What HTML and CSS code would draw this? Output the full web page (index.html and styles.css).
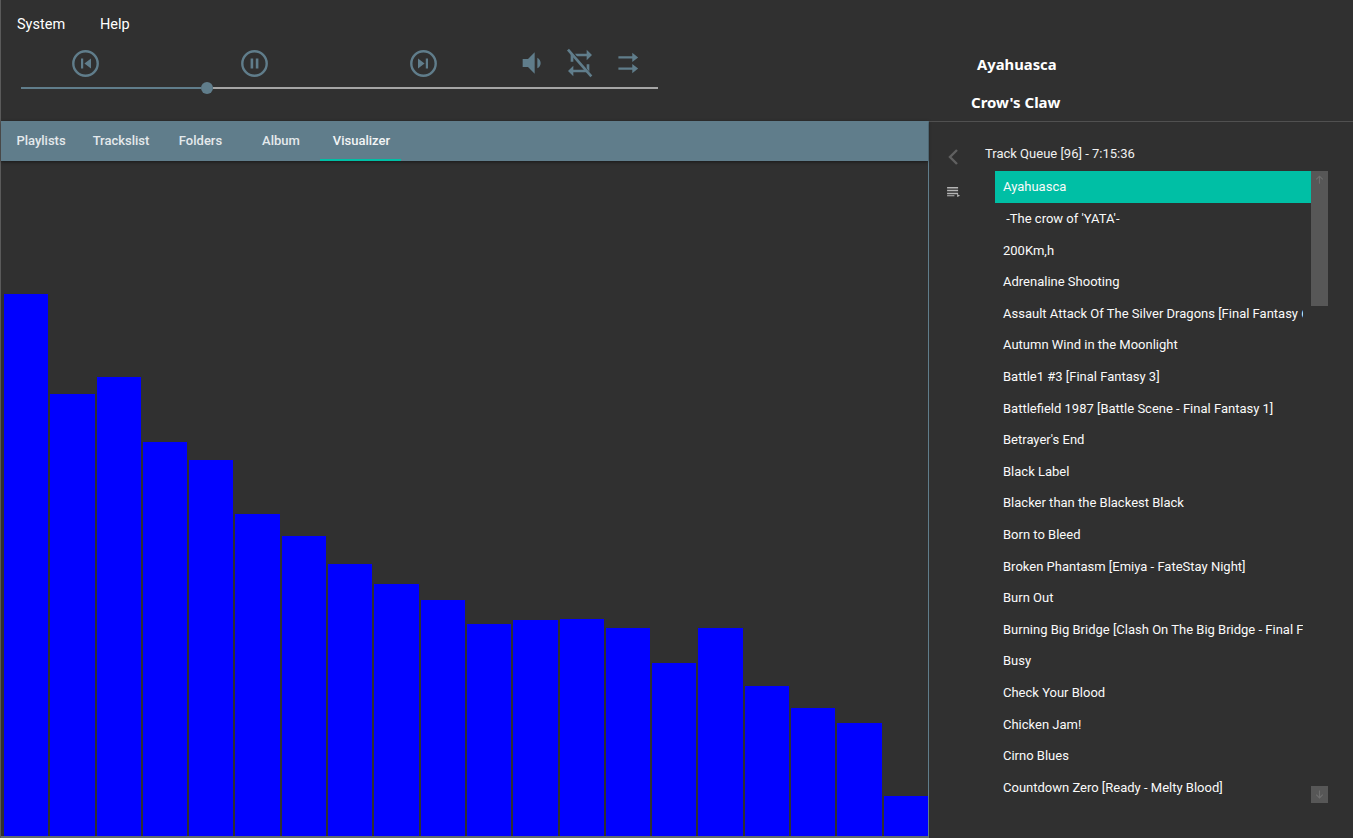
FILE: index.html
```html
<!DOCTYPE html>
<html lang="en">
<head>
    <meta charset="UTF-8">
    <title>Music Player</title>
    <link rel="stylesheet" href="styles.css">
</head>
<body>
    <div class="app">
        <header class="top">
            <div class="top-left">
                <nav class="menu">
                    <span class="menu-item menu-system">System</span>
                    <span class="menu-item">Help</span>
                </nav>
                <div class="controls">
                    <div class="btn-main">
                        <svg class="icon-round" viewBox="0 0 27 27"><circle cx="13.5" cy="13.5" r="12.2"/><path class="solid" d="M9 8.6h2.2v9.8H9zM12.4 13.5l6.6-5v10z"/></svg>
                    </div>
                    <div class="btn-main">
                        <svg class="icon-round" viewBox="0 0 27 27"><circle cx="13.5" cy="13.5" r="12.2"/><path class="solid" d="M9.6 8.6h2.6v9.8H9.6zM14.8 8.6h2.6v9.8h-2.6z"/></svg>
                    </div>
                    <div class="btn-main">
                        <svg class="icon-round" viewBox="0 0 27 27"><circle cx="13.5" cy="13.5" r="12.2"/><path class="solid" d="M8 8.5l6.6 5-6.6 5zM15.8 8.6H18v9.8h-2.2z"/></svg>
                    </div>
                    <div class="btn-small">
                        <svg class="icon" viewBox="0 0 24 24"><path class="solid" d="M18.5 12c0-1.77-1.02-3.29-2.5-4.03v8.05c1.48-.73 2.5-2.25 2.5-4.02zM5 9v6h4l5 5V4L9 9H5z"/></svg>
                    </div>
                    <div class="btn-small">
                        <svg class="icon" viewBox="0 0 24 24"><path class="solid" d="M7 7h10v3l4-4-4-4v3H5v6h2V7zm10 10H7v-3l-4 4 4 4v-3h12v-6h-2v4z"/><path class="strike-gap" d="M4.5 1.5l16 20"/><path class="strike" d="M3 2l17.5 20"/></svg>
                    </div>
                    <div class="btn-small">
                        <svg class="icon" viewBox="0 0 24 24"><path class="solid" d="M4.8 6.9h10.4V4.4l4.4 3.4-4.4 3.4V8.7H4.8zM4.8 15.3h10.4v-2.5l4.4 3.4-4.4 3.4v-2.5H4.8z"/></svg>
                    </div>
                </div>
                <div class="slider">
                    <div class="slider-done"></div>
                    <div class="slider-thumb"></div>
                    <div class="slider-rest"></div>
                </div>
            </div>
            <div class="now-playing">
                <div class="now-track">Ayahuasca</div>
                <div class="now-artist">Crow's Claw</div>
            </div>
        </header>

        <main class="main">
            <section class="left-panel">
                <div class="tabs">
                    <div class="tab tab-playlists">Playlists</div>
                    <div class="tab tab-tracks">Trackslist</div>
                    <div class="tab tab-folders">Folders</div>
                    <div class="tab tab-album">Album</div>
                    <div class="tab tab-visualizer">Visualizer</div>
                </div>
                <div class="visualizer">
                    <div class="bar" style="height: 542px"></div>
                    <div class="bar" style="height: 442px"></div>
                    <div class="bar" style="height: 459px"></div>
                    <div class="bar" style="height: 394px"></div>
                    <div class="bar" style="height: 376px"></div>
                    <div class="bar" style="height: 322px"></div>
                    <div class="bar" style="height: 300px"></div>
                    <div class="bar" style="height: 272px"></div>
                    <div class="bar" style="height: 252px"></div>
                    <div class="bar" style="height: 236px"></div>
                    <div class="bar" style="height: 212px"></div>
                    <div class="bar" style="height: 216px"></div>
                    <div class="bar" style="height: 217px"></div>
                    <div class="bar" style="height: 208px"></div>
                    <div class="bar" style="height: 173px"></div>
                    <div class="bar" style="height: 208px"></div>
                    <div class="bar" style="height: 150px"></div>
                    <div class="bar" style="height: 128px"></div>
                    <div class="bar" style="height: 113px"></div>
                    <div class="bar" style="height: 40px"></div>
                </div>
            </section>

            <aside class="queue">
                <div class="queue-side">
                    <svg class="side-back" viewBox="0 0 24 24"><path d="M16 5l-7 7 7 7"/></svg>
                    <svg class="side-list" viewBox="0 0 16 12"><path d="M1 1h12v1.6H1zM1 4.2h12v1.6H1zM1 7.4h12V9H1zM1 10.2h8v1H1zM12 8.8l3.2 1.7-3.2 1.5z"/></svg>
                </div>
                <div class="queue-body">
                    <div class="queue-title">Track Queue [96] - 7:15:36</div>
                    <div class="queue-box">
                        <ul class="track-list">
                            <li class="track track-current">Ayahuasca</li>
                            <li class="track">&nbsp;-The crow of 'YATA'-</li>
                            <li class="track">200Km,h</li>
                            <li class="track">Adrenaline Shooting</li>
                            <li class="track">Assault Attack Of The Silver Dragons [Final Fantasy 6 - Battle Theme]</li>
                            <li class="track">Autumn Wind in the Moonlight</li>
                            <li class="track">Battle1 #3 [Final Fantasy 3]</li>
                            <li class="track">Battlefield 1987 [Battle Scene - Final Fantasy 1]</li>
                            <li class="track">Betrayer's End</li>
                            <li class="track">Black Label</li>
                            <li class="track">Blacker than the Blackest Black</li>
                            <li class="track">Born to Bleed</li>
                            <li class="track">Broken Phantasm [Emiya - FateStay Night]</li>
                            <li class="track">Burn Out</li>
                            <li class="track">Burning Big Bridge [Clash On The Big Bridge - Final Fantasy 5]</li>
                            <li class="track">Busy</li>
                            <li class="track">Check Your Blood</li>
                            <li class="track">Chicken Jam!</li>
                            <li class="track">Cirno Blues</li>
                            <li class="track">Countdown Zero [Ready - Melty Blood]</li>
                        </ul>
                        <div class="scrollbar">
                            <div class="scroll-thumb">
                                <svg class="scroll-arrow" viewBox="0 0 12 12"><path d="M6 1.5L2 5.5l.8.8L5.4 3.8V10.5h1.2V3.8l2.6 2.5.8-.8z"/></svg>
                            </div>
                            <div class="scroll-down">
                                <svg class="scroll-arrow" viewBox="0 0 12 12"><path d="M6 10.5l4-4-.8-.8-2.6 2.5V1.5H5.4v6.7L2.8 5.7l-.8.8z"/></svg>
                            </div>
                        </div>
                    </div>
                </div>
            </aside>
        </main>
    </div>
</body>
</html>
```

FILE: styles.css
```css
html, body {
    margin: 0;
    padding: 0;
    height: 100%;
}
body {
    background-color: #303030;
    color: #fff;
    font-family: Roboto, sans-serif;
    font-size: 13px;
    overflow: hidden;
}
.app {
    height: 838px;
    display: flex;
    flex-direction: column;
    border-left: 1px solid #5a5a5a;
    box-sizing: border-box;
}

/* top bar */
.top {
    height: 121px;
    display: flex;
    flex-shrink: 0;
}
.top-left {
    width: 928px;
}
.menu {
    display: flex;
    padding: 16px 0 0 16px;
    height: 26px;
}
.menu-item {
    font-size: 14.5px;
    line-height: 18px;
}
.menu-system {
    width: 83px;
}
.controls {
    display: flex;
    align-items: center;
    height: 42px;
}
.btn-main {
    width: 169px;
    display: flex;
    justify-content: center;
}
.btn-small {
    width: 48px;
    display: flex;
    justify-content: center;
}
.icon-round {
    width: 27px;
    height: 27px;
}
.icon-round circle {
    fill: none;
    stroke: #607d8b;
    stroke-width: 2.4;
}
.icon {
    width: 32px;
    height: 32px;
}
.solid {
    fill: #607d8b;
}
.strike {
    stroke: #607d8b;
    stroke-width: 2;
    fill: none;
}
.strike-gap {
    stroke: #303030;
    stroke-width: 1.4;
    fill: none;
}
.slider {
    display: flex;
    align-items: center;
    height: 12px;
    width: 637px;
    margin: -2px 0 0 20px;
}
.slider-done {
    width: 180px;
    height: 2px;
    background: #607d8b;
}
.slider-thumb {
    width: 12px;
    height: 12px;
    border-radius: 50%;
    background: #607d8b;
}
.slider-rest {
    flex: 1;
    height: 2px;
    background: #a5a5a5;
}
.now-playing {
    flex: 1;
    font-family: "Noto Sans", sans-serif;
    font-weight: 700;
    font-size: 15px;
}
.now-track {
    padding: 53px 0 0 48px;
    font-size: 14.8px;
    line-height: 22px;
}
.now-artist {
    padding: 16px 0 0 42px;
    line-height: 22px;
}

/* main area */
.main {
    flex: 1;
    display: flex;
    min-height: 0;
}
.left-panel {
    width: 927px;
    display: flex;
    flex-direction: column;
    border-right: 1px solid #607d8b;
    border-bottom: 2px solid #5f6a70;
    box-sizing: content-box;
    height: 715px;
}
.tabs {
    height: 40px;
    flex-shrink: 0;
    display: flex;
    background: #607d8b;
    box-shadow: 0 1px 3px rgba(0, 0, 0, 0.5);
    position: relative;
}
.tab {
    font-size: 13px;
    font-weight: 500;
    line-height: 40px;
    color: #e4e9ec;
    text-align: center;
    box-sizing: border-box;
}
.tab-playlists { width: 79px; padding-left: 1px; }
.tab-tracks { width: 70px; margin-left: 6px; }
.tab-folders { width: 89px; }
.tab-album { width: 72px; }
.tab-visualizer {
    width: 81px;
    margin-left: 3px;
    padding-left: 2px;
    color: #f2f4f5;
    border-bottom: 2px solid #00bfa5;
}
.visualizer {
    flex: 1;
    display: flex;
    align-items: flex-end;
    gap: 2px;
    padding-left: 3px;
}
.bar {
    flex: 1;
    background: #0000ff;
}

/* queue on the right */
.queue {
    flex: 1;
    display: flex;
    border-top: 1px solid #505050;
    height: 716px;
}
.queue-side {
    width: 48px;
    display: flex;
    flex-direction: column;
    align-items: center;
    flex-shrink: 0;
}
.side-back {
    width: 24px;
    height: 24px;
    margin-top: 23px;
    fill: none;
    stroke: #606060;
    stroke-width: 2.4;
}
.side-list {
    width: 15px;
    height: 11px;
    margin-top: 17px;
    fill: #b5b5b5;
}
.queue-body {
    flex: 1;
    padding-left: 8px;
}
.queue-title {
    font-size: 13px;
    line-height: 16px;
    color: #f0f0f0;
    padding-top: 24px;
    margin-bottom: 9px;
}
.queue-box {
    display: flex;
    height: 632px;
    margin-left: 10px;
    width: 333px;
}
.track-list {
    list-style: none;
    margin: 0;
    padding: 0;
    width: 316px;
    overflow: hidden;
}
/* transparent border: text clips 8px before the row's right edge */
.track {
    box-sizing: content-box;
    height: 31.1407px;
    line-height: 31.6px;
    padding: 0.4532px 0 0 8px;
    border-right: 8px solid transparent;
    white-space: nowrap;
    overflow: hidden;
    font-size: 13px;
    color: #fafafa;
}
.track-current {
    background: #00bfa5;
}
.scrollbar {
    width: 17px;
    display: flex;
    flex-direction: column;
    justify-content: space-between;
}
.scroll-thumb {
    height: 135px;
    background: #575757;
    display: flex;
    justify-content: center;
    padding-top: 3px;
    box-sizing: border-box;
}
.scroll-down {
    height: 17px;
    background: #575757;
    display: flex;
    justify-content: center;
    align-items: center;
}
.scroll-arrow {
    width: 11px;
    height: 11px;
    fill: #6e6e6e;
}
```
